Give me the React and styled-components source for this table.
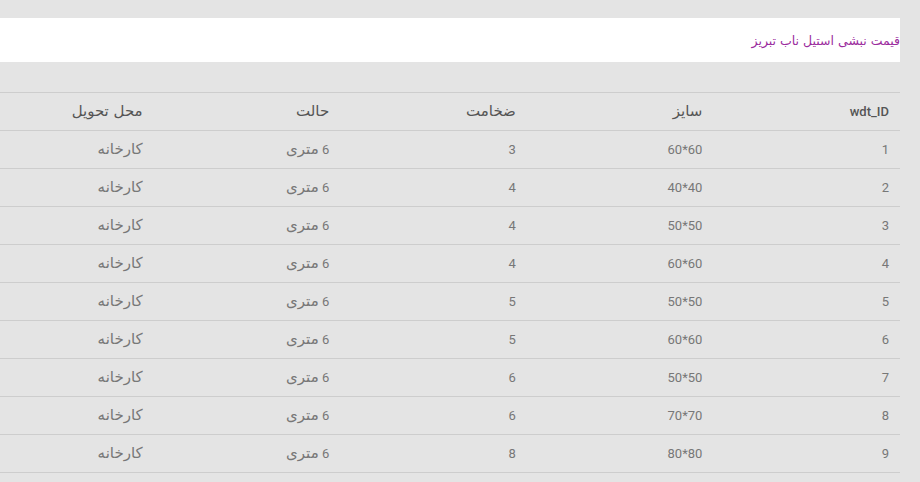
import React from "react";
import styled, { createGlobalStyle } from "styled-components";

const rows = [
  { id: 1, size: "60*60", thick: 3 },
  { id: 2, size: "40*40", thick: 4 },
  { id: 3, size: "50*50", thick: 4 },
  { id: 4, size: "60*60", thick: 4 },
  { id: 5, size: "50*50", thick: 5 },
  { id: 6, size: "60*60", thick: 5 },
  { id: 7, size: "50*50", thick: 6 },
  { id: 8, size: "70*70", thick: 6 },
  { id: 9, size: "80*80", thick: 8 },
];

const GlobalStyle = createGlobalStyle`
  html, body {
    margin: 0;
    background: #e4e4e4;
    overflow: hidden;
  }
`;

const Page = styled.div`
  direction: rtl;
  width: 900px;
  padding-top: 18px;
  font-family: Roboto, "DejaVu Sans", sans-serif;
`;

const TitleBar = styled.div`
  height: 44px;
  background: #ffffff;
  display: flex;
  align-items: center;
`;

const Title = styled.span`
  font-family: "DejaVu Sans", sans-serif;
  font-size: 12.5px;
  color: #9b2c9e;
`;

const Table = styled.table`
  margin-top: 30px;
  width: 933px;
  table-layout: fixed;
  border-collapse: collapse;
`;

const Cell = styled.td`
  height: 37px;
  padding: 0 11px 0 0;
  text-align: right;
  font-size: 13px;
  line-height: 16px;
  color: ${(p) => (p.$head ? "#555555" : "#777777")};
  font-weight: ${(p) => (p.$head ? 500 : 400)};
  border-top: 1px solid #cdcdcd;
  border-bottom: 1px solid #cdcdcd;
`;

const Fa = styled.span`
  font-family: "DejaVu Sans", sans-serif;
  font-weight: 400;
  font-size: 15px;
`;

const Row = styled.tr``;

export default function App() {
  return (
    <>
      <GlobalStyle />
      <Page>
        <TitleBar>
          <Title>قیمت نبشی استیل ناب تبریز</Title>
        </TitleBar>
        <Table>
          <thead>
            <Row>
              <Cell as="th" $head>wdt_ID</Cell>
              <Cell as="th" $head><Fa>سایز</Fa></Cell>
              <Cell as="th" $head><Fa>ضخامت</Fa></Cell>
              <Cell as="th" $head><Fa>حالت</Fa></Cell>
              <Cell as="th" $head><Fa>محل تحویل</Fa></Cell>
            </Row>
          </thead>
          <tbody>
            {rows.map((r) => (
              <Row key={r.id}>
                <Cell>{r.id}</Cell>
                <Cell>{r.size}</Cell>
                <Cell>{r.thick}</Cell>
                <Cell>6 <Fa>متری</Fa></Cell>
                <Cell><Fa>کارخانه</Fa></Cell>
              </Row>
            ))}
          </tbody>
        </Table>
      </Page>
    </>
  );
}
